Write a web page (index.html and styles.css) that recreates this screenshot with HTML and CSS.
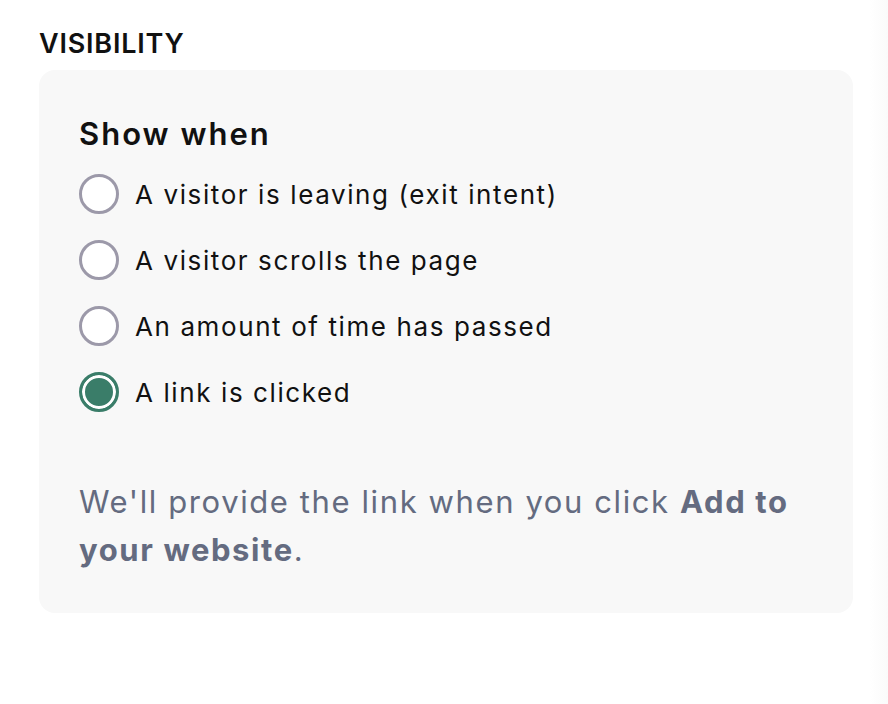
FILE: index.html
```html
<!DOCTYPE html>
<html>
<head>
<meta charset="utf-8">
<link rel="stylesheet" href="styles.css">
</head>
<body>
<div class="page">
  <div class="section-label">VISIBILITY</div>
  <div class="card">
    <div class="card-title">Show when</div>
    <div class="options">
      <label class="option"><span class="radio"></span><span class="option-text">A visitor is leaving (exit intent)</span></label>
      <label class="option"><span class="radio"></span><span class="option-text">A visitor scrolls the page</span></label>
      <label class="option"><span class="radio"></span><span class="option-text">An amount of time has passed</span></label>
      <label class="option"><span class="radio checked"></span><span class="option-text">A link is clicked</span></label>
    </div>
    <p class="note">We'll provide the link when you click <strong>Add to your website</strong>.</p>
  </div>
</div>
<div class="edge"></div>
</body>
</html>
```
FILE: styles.css
```css
html, body {
  margin: 0;
  padding: 0;
  background: #ffffff;
}
body {
  font-family: Inter, "Open Sans", sans-serif;
  color: #111111;
  width: 888px;
  height: 704px;
  overflow: hidden;
  position: relative;
}
.page {
  padding: 28px 35px 0 39px;
}
.section-label {
  font-size: 27px;
  font-weight: 600;
  letter-spacing: 0.8px;
  line-height: 32px;
  color: #111;
}
.card {
  margin-top: 10px;
  width: 814px;
  height: 543px;
  box-sizing: border-box;
  background: #f8f8f8;
  border-radius: 16px;
  padding: 44px 40px 0 40px;
}
.card-title {
  font-size: 31px;
  font-weight: 600;
  letter-spacing: 2px;
  line-height: 40px;
}
.options {
  display: flex;
  flex-direction: column;
  gap: 26px;
  margin-top: 20px;
}
.option {
  display: flex;
  align-items: center;
  gap: 16px;
  height: 40px;
}
.radio {
  width: 40px;
  height: 40px;
  box-sizing: border-box;
  border: 3px solid #9c99a9;
  border-radius: 50%;
  background: #ffffff;
  flex: none;
}
.radio.checked {
  border-color: #3a7d69;
  background: #3a7d69;
  box-shadow: inset 0 0 0 3px #ffffff;
}
.option-text {
  font-size: 26px;
  font-weight: 400;
  letter-spacing: 1.6px;
}
.note {
  margin: 66px 0 0 0;
  font-size: 31px;
  line-height: 48px;
  letter-spacing: 1.6px;
  color: #646b80;
}
.note strong {
  font-weight: 700;
}
.edge {
  position: absolute;
  top: 0;
  right: 0;
  width: 18px;
  height: 704px;
  background: linear-gradient(to right, #ffffff, #fafafa);
}
```
